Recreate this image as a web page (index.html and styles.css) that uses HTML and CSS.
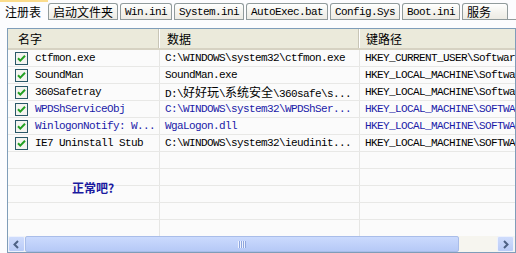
FILE: index.html
```html
<!DOCTYPE html>
<html lang="zh-CN">
<head>
<meta charset="utf-8">
<title>启动项</title>
<link rel="stylesheet" href="styles.css">
</head>
<body>
<div class="tabs">
  <div class="tab active">注册表</div>
  <div class="tab">启动文件夹</div>
  <div class="tab mono">Win.ini</div>
  <div class="tab mono">System.ini</div>
  <div class="tab mono">AutoExec.bat</div>
  <div class="tab mono">Config.Sys</div>
  <div class="tab mono">Boot.ini</div>
  <div class="tab last">服务</div>
  <div class="tab-fill"></div>
</div>
<div class="panel">
  <div class="list">
    <div class="header">
      <div class="hcell c1">名字</div>
      <div class="hcell c2">数据</div>
      <div class="hcell c3">键路径</div>
    </div>
    <div class="rows">
      <div class="row">
        <div class="cell c1"><span class="chk"><svg width="13" height="13" viewBox="0 0 13 13"><rect x="0.5" y="0.5" width="12" height="12" fill="#f4f4f0" stroke="#2a5868"/><path d="M3 6.2 L5.3 8.6 L10 3.8" fill="none" stroke="#22a022" stroke-width="2"/></svg></span><span class="txt">ctfmon.exe</span></div>
        <div class="cell c2">C:\WINDOWS\system32\ctfmon.exe</div>
        <div class="cell c3">HKEY_CURRENT_USER\Softwar</div>
      </div>
      <div class="row">
        <div class="cell c1"><span class="chk"><svg width="13" height="13" viewBox="0 0 13 13"><rect x="0.5" y="0.5" width="12" height="12" fill="#f4f4f0" stroke="#2a5868"/><path d="M3 6.2 L5.3 8.6 L10 3.8" fill="none" stroke="#22a022" stroke-width="2"/></svg></span><span class="txt">SoundMan</span></div>
        <div class="cell c2">SoundMan.exe</div>
        <div class="cell c3">HKEY_LOCAL_MACHINE\Softwa</div>
      </div>
      <div class="row">
        <div class="cell c1"><span class="chk"><svg width="13" height="13" viewBox="0 0 13 13"><rect x="0.5" y="0.5" width="12" height="12" fill="#f4f4f0" stroke="#2a5868"/><path d="M3 6.2 L5.3 8.6 L10 3.8" fill="none" stroke="#22a022" stroke-width="2"/></svg></span><span class="txt">360Safetray</span></div>
        <div class="cell c2">D:\<span class="cjk">好好玩</span>\<span class="cjk">系统安全</span>\360safe\s...</div>
        <div class="cell c3">HKEY_LOCAL_MACHINE\Softwa</div>
      </div>
      <div class="row blue">
        <div class="cell c1"><span class="chk"><svg width="13" height="13" viewBox="0 0 13 13"><rect x="0.5" y="0.5" width="12" height="12" fill="#f4f4f0" stroke="#2a5868"/><path d="M3 6.2 L5.3 8.6 L10 3.8" fill="none" stroke="#22a022" stroke-width="2"/></svg></span><span class="txt">WPDShServiceObj</span></div>
        <div class="cell c2">C:\WINDOWS\system32\WPDShSer...</div>
        <div class="cell c3">HKEY_LOCAL_MACHINE\SOFTWA</div>
      </div>
      <div class="row blue">
        <div class="cell c1"><span class="chk"><svg width="13" height="13" viewBox="0 0 13 13"><rect x="0.5" y="0.5" width="12" height="12" fill="#f4f4f0" stroke="#2a5868"/><path d="M3 6.2 L5.3 8.6 L10 3.8" fill="none" stroke="#22a022" stroke-width="2"/></svg></span><span class="txt">WinlogonNotify: W...</span></div>
        <div class="cell c2">WgaLogon.dll</div>
        <div class="cell c3">HKEY_LOCAL_MACHINE\SOFTWA</div>
      </div>
      <div class="row">
        <div class="cell c1"><span class="chk"><svg width="13" height="13" viewBox="0 0 13 13"><rect x="0.5" y="0.5" width="12" height="12" fill="#f4f4f0" stroke="#2a5868"/><path d="M3 6.2 L5.3 8.6 L10 3.8" fill="none" stroke="#22a022" stroke-width="2"/></svg></span><span class="txt">IE7 Uninstall Stub</span></div>
        <div class="cell c2">C:\WINDOWS\system32\ieudinit...</div>
        <div class="cell c3">HKEY_LOCAL_MACHINE\SOFTWA</div>
      </div>
      <div class="row"><div class="cell c1"></div><div class="cell c2"></div><div class="cell c3"></div></div>
      <div class="row"><div class="cell c1"></div><div class="cell c2"></div><div class="cell c3"></div></div>
      <div class="row"><div class="cell c1"></div><div class="cell c2"></div><div class="cell c3"></div></div>
      <div class="row"><div class="cell c1"></div><div class="cell c2"></div><div class="cell c3"></div></div>
      <div class="row"><div class="cell c1"></div><div class="cell c2"></div><div class="cell c3"></div></div>
    </div>
    <div class="hscroll">
      <div class="sb-btn"><svg width="9" height="9" viewBox="0 0 9 9"><path d="M6 1 L2.5 4.5 L6 8" fill="none" stroke="#4d6185" stroke-width="2"/></svg></div>
      <div class="sb-thumb"><span class="grip"></span></div>
      <div class="sb-track"></div>
      <div class="sb-btn"><svg width="9" height="9" viewBox="0 0 9 9"><path d="M3 1 L6.5 4.5 L3 8" fill="none" stroke="#4d6185" stroke-width="2"/></svg></div>
    </div>
  </div>
  <div class="note">正常吧?</div>
</div>
</body>
</html>
```

FILE: styles.css
```css
* { box-sizing: border-box; }
html, body { margin: 0; padding: 0; }
body {
  width: 516px;
  height: 253px;
  overflow: hidden;
  background: #fcfcfe;
  font-family: "Liberation Mono", "Noto Sans CJK SC", monospace;
  font-size: 11px;
  color: #000;
  position: relative;
}

/* tabs */
.tabs {
  display: flex;
  align-items: flex-end;
  height: 20px;
  gap: 2px;
}
.tab {
  height: 17px;
  padding: 0 4px;
  border: 1px solid #919b9c;
  border-bottom: none;
  border-radius: 3px 3px 0 0;
  background: linear-gradient(#ffffff, #f4f3ee 50%, #eceae2);
  font-family: "Noto Sans CJK SC", sans-serif;
  font-size: 12px;
  line-height: 15px;
  white-space: nowrap;
  box-shadow: inset 0 -1px 0 #919b9c;
}
.tab.mono {
  font-family: "Liberation Mono", monospace;
  font-size: 11px;
  letter-spacing: -0.6px;
  line-height: 16px;
}
.tab.active {
  width: 48px;
  height: 20px;
  margin-right: -2px;
  padding: 2px 0 0 5px;
  border: none;
  border-top: 2px solid #fbdc8c;
  border-radius: 0;
  background: #fcfcfe;
  box-shadow: none;
}
.tab.last { padding-right: 16px; }
.tab-fill {
  flex: 1;
  height: 1px;
  background: #919b9c;
  margin-left: -2px;
}

/* panel and list */
.panel {
  padding: 8px 0 0 7px;
}
.list {
  width: 509px;
  border: 1px solid #7f9db9;
  background: #fbfbfb;
}
.header {
  display: flex;
  height: 21px;
  background: #ebeadb;
  border-bottom: 2px solid #d6d2c2;
  font-family: "Noto Sans CJK SC", sans-serif;
  font-size: 12px;
  line-height: 19px;
}
.hcell {
  white-space: nowrap;
}
.hcell.c1, .hcell.c2 {
  border-right: 1px solid #fff;
  box-shadow: inset -1px 0 0 #c8c5b6;
}
.c1 { width: 152px; flex: none; }
.c2 { width: 200px; flex: none; }
.c3 { flex: 1; min-width: 0; }
.hcell.c1 { padding-left: 10px; }
.hcell.c2 { padding-left: 7px; }
.hcell.c3 { padding-left: 6px; }

.rows {
  height: 186px;
  overflow: hidden;
}
.row {
  display: flex;
  height: 17px;
  border-bottom: 1px solid #e8e8e6;
  line-height: 16px;
  letter-spacing: -0.6px;
}
.row.blue { color: #1a1aa8; }
.cell {
  white-space: nowrap;
  overflow: hidden;
}
.cell.c1, .cell.c2 { border-right: 1px solid #e6e6e4; }
.cell.c1 {
  display: flex;
  align-items: center;
  padding-left: 7px;
}
.cell.c2 { padding-left: 5px; }
.cell.c3 { padding-left: 5px; }
.chk {
  display: block;
  width: 13px;
  height: 13px;
  margin-right: 7px;
  flex: none;
}
.chk svg { display: block; }
.cjk {
  font-family: "Noto Sans CJK SC", sans-serif;
  font-size: 12px;
  letter-spacing: 0;
}

/* horizontal scrollbar */
.hscroll {
  display: flex;
  height: 16px;
  padding-right: 1px;
  background: #f6f5ef;
}
.sb-btn {
  width: 17px;
  flex: none;
  display: flex;
  align-items: center;
  justify-content: center;
  border: 1px solid #eef2fd;
  border-radius: 2px;
  background: linear-gradient(#cfdcfc, #b9cbf7);
}
.sb-btn svg { display: block; }
.sb-thumb {
  width: 434px;
  flex: none;
  display: flex;
  align-items: center;
  justify-content: center;
  border: 1px solid #a9bde9;
  border-radius: 2px;
  background: linear-gradient(#cbdafd, #b6c9f6);
}
.grip {
  width: 8px;
  height: 7px;
  background: repeating-linear-gradient(90deg, #eef3fe 0 1px, #8ea6de 1px 2px);
}
.sb-track { flex: 1; }

.note {
  position: absolute;
  left: 72px;
  top: 180px;
  font-family: "Noto Sans CJK SC", sans-serif;
  font-size: 12px;
  font-weight: bold;
  color: #1a1aa0;
  line-height: 16px;
}
```
